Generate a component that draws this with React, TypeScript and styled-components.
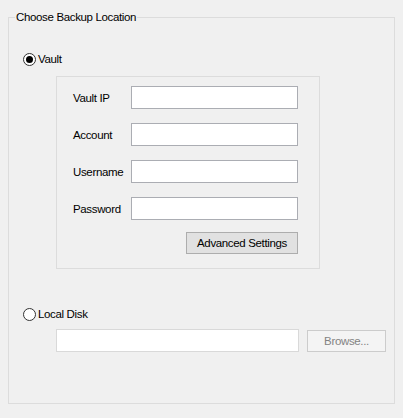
import React from "react";
import styled, { createGlobalStyle } from "styled-components";

const GlobalStyle = createGlobalStyle`
  html, body {
    margin: 0;
    padding: 0;
    background: #f0f0f0;
  }
  body {
    width: 403px;
    height: 418px;
    overflow: hidden;
    font-family: "Liberation Sans", Arial, sans-serif;
    font-size: 11.5px;
    letter-spacing: -0.35px;
    color: #000;
  }
`;

const Group = styled.div`
  position: relative;
  box-sizing: border-box;
  margin: 17px 8px 0;
  width: 387px;
  height: 387px;
  border: 1px solid #dcdcdc;
  padding: 33px 0 0 14px;
  display: flex;
  flex-direction: column;
`;

const GroupTitle = styled.span`
  position: absolute;
  top: -9px;
  left: 6px;
  padding: 0 1px;
  line-height: 16px;
  background: #f0f0f0;
`;

const RadioRow = styled.label<{ $top?: number }>`
  display: flex;
  align-items: center;
  gap: 2px;
  height: 16px;
  margin-top: ${(p) => p.$top ?? 0}px;
  line-height: 16px;
`;

const RadioCircle = styled.span<{ $checked?: boolean }>`
  box-sizing: border-box;
  width: 13px;
  height: 13px;
  border-radius: 50%;
  border: 1px solid #333;
  background: #fff;
  display: flex;
  align-items: center;
  justify-content: center;

  &::after {
    content: "";
    display: ${(p) => (p.$checked ? "block" : "none")};
    width: 7px;
    height: 7px;
    border-radius: 50%;
    background: #000;
  }
`;

const Panel = styled.div`
  box-sizing: border-box;
  margin: 9px 0 0 33px;
  width: 264px;
  height: 193px;
  border: 1px solid #dcdcdc;
  padding: 9px 0 0 16px;
  display: flex;
  flex-direction: column;
  gap: 14px;
`;

const FieldRow = styled.div`
  display: flex;
  align-items: center;
  height: 23px;
`;

const FieldLabel = styled.span`
  width: 58px;
`;

const TextInput = styled.input<{ $width: number; $disabled?: boolean }>`
  box-sizing: border-box;
  width: ${(p) => p.$width}px;
  height: 23px;
  margin: 0;
  padding: 0 3px;
  border: 1px solid ${(p) => (p.$disabled ? "#d9d9d9" : "#abadb3")};
  background: #fff;
  font: inherit;
  outline: none;
`;

const ButtonRow = styled.div`
  display: flex;
  justify-content: flex-end;
  width: 225px;
  margin-top: -2px;
`;

const Button = styled.button<{ $width: number; $disabled?: boolean }>`
  box-sizing: border-box;
  width: ${(p) => p.$width}px;
  height: 22px;
  margin: 0;
  padding: 0;
  font: inherit;
  letter-spacing: inherit;
  line-height: 20px;
  color: ${(p) => (p.$disabled ? "#838383" : "#000")};
  background: ${(p) => (p.$disabled ? "#f4f4f4" : "#e1e1e1")};
  border: 1px solid ${(p) => (p.$disabled ? "#cccccc" : "#adadad")};
  border-radius: 0;
`;

const DiskRow = styled.div`
  display: flex;
  align-items: center;
  gap: 8px;
  margin: 7px 0 0 33px;
`;

const fields = ["Vault IP", "Account", "Username", "Password"];

export default function App() {
  return (
    <>
      <GlobalStyle />
      <Group>
        <GroupTitle>Choose Backup Location</GroupTitle>
        <RadioRow>
          <RadioCircle $checked />
          Vault
        </RadioRow>
        <Panel>
          {fields.map((f) => (
            <FieldRow key={f}>
              <FieldLabel>{f}</FieldLabel>
              <TextInput $width={167} />
            </FieldRow>
          ))}
          <ButtonRow>
            <Button $width={112}>Advanced Settings</Button>
          </ButtonRow>
        </Panel>
        <RadioRow $top={37}>
          <RadioCircle />
          Local Disk
        </RadioRow>
        <DiskRow>
          <TextInput $width={243} $disabled />
          <Button $width={79} $disabled>
            Browse...
          </Button>
        </DiskRow>
      </Group>
    </>
  );
}
